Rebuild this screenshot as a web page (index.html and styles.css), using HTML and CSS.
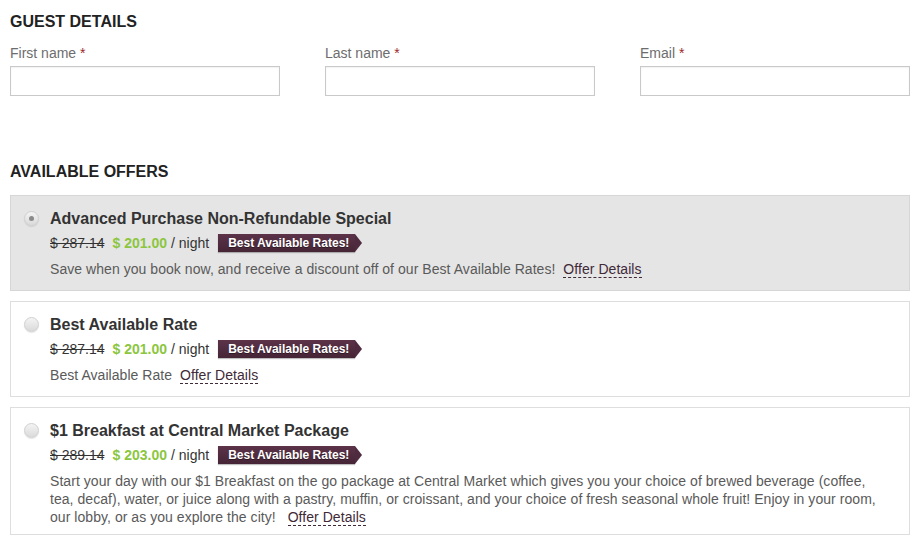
FILE: index.html
```html
<!DOCTYPE html>
<html>
<head>
<meta charset="utf-8">
<link rel="stylesheet" href="styles.css">
</head>
<body>
<div class="page">
  <section class="guest">
    <h2 class="heading">GUEST DETAILS</h2>
    <div class="fields">
      <div class="field">
        <label class="label">First name <span class="req">*</span></label>
        <input class="input" type="text">
      </div>
      <div class="field">
        <label class="label">Last name <span class="req">*</span></label>
        <input class="input" type="text">
      </div>
      <div class="field">
        <label class="label">Email <span class="req">*</span></label>
        <input class="input" type="text">
      </div>
    </div>
  </section>

  <section class="offers">
    <h2 class="heading">AVAILABLE OFFERS</h2>
    <div class="offer selected">
      <span class="radio checked"></span>
      <div class="offer-body">
        <div class="offer-title">Advanced Purchase Non-Refundable Special</div>
        <div class="price-row">
          <span class="old">$ 287.14</span>
          <span class="new">$ 201.00</span>
          <span class="per">/ night</span>
          <span class="badge">Best Available Rates!</span>
        </div>
        <div class="desc">Save when you book now, and receive a discount off of our Best Available Rates! <a class="details">Offer Details</a></div>
      </div>
    </div>
    <div class="offer">
      <span class="radio"></span>
      <div class="offer-body">
        <div class="offer-title">Best Available Rate</div>
        <div class="price-row">
          <span class="old">$ 287.14</span>
          <span class="new">$ 201.00</span>
          <span class="per">/ night</span>
          <span class="badge">Best Available Rates!</span>
        </div>
        <div class="desc">Best Available Rate <a class="details">Offer Details</a></div>
      </div>
    </div>
    <div class="offer">
      <span class="radio"></span>
      <div class="offer-body">
        <div class="offer-title">$1 Breakfast at Central Market Package</div>
        <div class="price-row">
          <span class="old">$ 289.14</span>
          <span class="new">$ 203.00</span>
          <span class="per">/ night</span>
          <span class="badge">Best Available Rates!</span>
        </div>
        <div class="desc">Start your day with our $1 Breakfast on the go package at Central Market which gives you your choice of brewed beverage (coffee, tea, decaf), water, or juice along with a pastry, muffin, or croissant, and your choice of fresh seasonal whole fruit! Enjoy in your room, our lobby, or as you explore the city! &nbsp;<a class="details">Offer Details</a></div>
      </div>
    </div>
  </section>
</div>
</body>
</html>
```
FILE: styles.css
```css
* { box-sizing: border-box; }
html, body { margin: 0; padding: 0; background: #fff; }
body {
  font-family: "Liberation Sans", Arial, sans-serif;
  color: #333;
}
.page {
  width: 900px;
  margin-left: 10px;
  padding-top: 12px;
}
.heading {
  margin: 0;
  font-size: 16px;
  line-height: 20px;
  font-weight: bold;
  color: #222;
}
.fields {
  display: grid;
  grid-template-columns: repeat(3, 270px);
  column-gap: 45px;
  margin-top: 13px;
}
.field { display: flex; flex-direction: column; }
.label {
  font-size: 14px;
  line-height: 16px;
  color: #6d6d6d;
  margin-bottom: 5px;
}
.req { color: #9b2a2a; }
.input {
  width: 270px;
  height: 30px;
  margin: 0;
  border: 1px solid #c9c9c9;
  background: #fff;
  box-shadow: inset 0 1px 2px rgba(0,0,0,0.06);
}
.offers { margin-top: 66px; }
.offers .heading { margin-bottom: 13px; }
.offer {
  display: flex;
  align-items: flex-start;
  border: 1px solid #dedede;
  background: #fff;
  padding: 13px 12px 12px 13px;
  margin-bottom: 10px;
}
.offer:last-child { padding-bottom: 8px; }
.offer.selected {
  background: #e5e5e5;
  border-color: #d6d6d6;
}
.radio {
  flex: none;
  width: 15px;
  height: 15px;
  border-radius: 50%;
  margin-top: 2px;
  margin-right: 11px;
  background: linear-gradient(#f4f4f4, #dadada);
  border: 1px solid #d0d0d0;
  box-shadow: 0 1px 1px rgba(0,0,0,0.1);
  position: relative;
}
.radio.checked::after {
  content: "";
  position: absolute;
  left: 4px; top: 4px;
  width: 5px; height: 5px;
  border-radius: 50%;
  background: #8a8a8a;
}
.offer-body { flex: 1; max-width: 840px; }
.offer-title {
  font-size: 16px;
  line-height: 20px;
  font-weight: bold;
  color: #333;
}
.price-row {
  display: flex;
  align-items: center;
  height: 27px;
  font-size: 14px;
  color: #333;
}
.old { text-decoration: line-through; }
.new { color: #8cc63f; font-weight: bold; margin-left: 8px; }
.per { margin-left: 4px; }
.badge {
  position: relative;
  margin-left: 9px;
  height: 18px;
  line-height: 18px;
  padding: 0 6px 0 10px;
  font-size: 12px;
  font-weight: bold;
  color: #fff;
  background: linear-gradient(#5c3349, #452536);
  box-shadow: 0 1px 1px rgba(0,0,0,0.25);
  text-shadow: 0 1px 0 rgba(0,0,0,0.4);
}
.badge::after {
  content: "";
  position: absolute;
  right: -7px; top: 0;
  border-style: solid;
  border-width: 9px 0 9px 7px;
  border-color: transparent transparent transparent #4f2b3f;
}
.desc {
  margin-top: 4px;
  font-size: 14px;
  line-height: 18px;
  letter-spacing: 0.05px;
  color: #5a5a5a;
}
.details {
  color: #3f2a38;
  border-bottom: 1px dashed #3f2a38;
  margin-left: 4px;
  cursor: pointer;
}
```
